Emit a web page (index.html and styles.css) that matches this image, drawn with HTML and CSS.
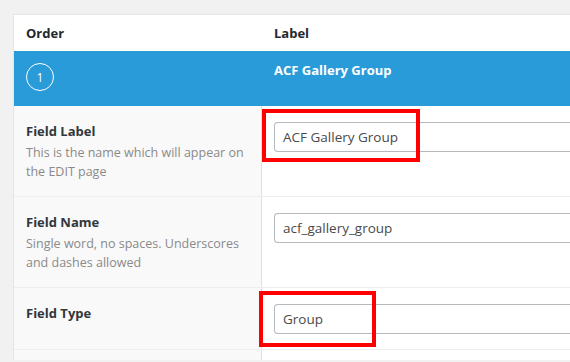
FILE: index.html
```html
<!DOCTYPE html>
<html>
<head>
<meta charset="utf-8">
<link rel="stylesheet" href="styles.css">
</head>
<body>
<div class="panel">
  <div class="thead">
    <div class="th th-order">Order</div>
    <div class="th th-label">Label</div>
  </div>
  <div class="handle">
    <div class="h-order"><span class="circle">1</span></div>
    <div class="h-label">ACF Gallery Group</div>
  </div>
  <div class="row">
    <div class="lab">
      <div class="lab-title">Field Label</div>
      <div class="lab-desc">This is the name which will appear on the EDIT page</div>
    </div>
    <div class="inp">
      <div class="field">ACF Gallery Group</div>
      <div class="mark mark-1"></div>
    </div>
  </div>
  <div class="row">
    <div class="lab">
      <div class="lab-title">Field Name</div>
      <div class="lab-desc">Single word, no spaces. Underscores and dashes allowed</div>
    </div>
    <div class="inp">
      <div class="field">acf_gallery_group</div>
    </div>
  </div>
  <div class="row">
    <div class="lab">
      <div class="lab-title">Field Type</div>
    </div>
    <div class="inp">
      <div class="field">Group</div>
      <div class="mark mark-3"></div>
    </div>
  </div>
  <div class="row row-empty">
    <div class="lab"></div>
    <div class="inp"></div>
  </div>
</div>
</body>
</html>
```

FILE: styles.css
```css
html, body {
  margin: 0;
  padding: 0;
  background: #f1f1f1;
  overflow: hidden;
  width: 570px;
  height: 362px;
}
body {
  font-family: "Open Sans", "Noto Sans", sans-serif;
  color: #32373c;
}
.panel {
  margin: 14px 0 0 13px;
  background: #fff;
  border-top: 1px solid #e5e5e5;
  border-left: 1px solid #e5e5e5;
}
.thead {
  display: grid;
  grid-template-columns: 248px 1fr;
  height: 36px;
  align-items: center;
}
.th {
  font-weight: 700;
  font-size: 13px;
  color: #23282d;
}
.th-order { padding-left: 12px; }
.th-label { padding-left: 12px; }
.handle {
  display: grid;
  grid-template-columns: 248px 1fr;
  height: 55px;
  background: #2a9bd9;
  color: #fff;
}
.h-order {
  padding: 12px 0 0 12px;
}
.circle {
  display: flex;
  align-items: center;
  justify-content: center;
  box-sizing: border-box;
  width: 28px;
  height: 28px;
  border: 1.5px solid #fff;
  border-radius: 50%;
  font-size: 12px;
}
.h-label {
  padding: 9px 0 0 12px;
  font-weight: 700;
  font-size: 13px;
  line-height: 20px;
}
.row {
  display: grid;
  grid-template-columns: 248px 1fr;
  border-top: 1px solid #eeeeee;
}
.handle + .row { border-top: 0; }
.lab {
  background: #f9f9f9;
  border-right: 1px solid #e1e1e1;
  padding: 15px 12px 15px 12px;
}
.lab-title {
  font-weight: 700;
  font-size: 13px;
  line-height: 20px;
  color: #32373c;
}
.lab-desc {
  margin-top: 2px;
  font-size: 12.5px;
  line-height: 19px;
  color: #8a8a8a;
}
.inp {
  position: relative;
  padding: 16px 0 15px 12px;
}
.field {
  height: 30px;
  box-sizing: border-box;
  border: 1px solid #b4b9be;
  border-right: 0;
  border-radius: 4px 0 0 4px;
  padding: 0 8px;
  font-size: 13.5px;
  line-height: 28px;
  color: #4a4a4a;
  background: #fff;
}
.mark {
  position: absolute;
  border: 4px solid #ff0000;
  box-sizing: border-box;
}
.mark-1 {
  left: 0;
  top: 3px;
  width: 158px;
  height: 53px;
}
.mark-3 {
  left: -3px;
  top: 3px;
  width: 117px;
  height: 56px;
}
.row-empty .lab, .row-empty .inp {
  height: 0;
  padding-top: 10px;
  padding-bottom: 0;
}
```
